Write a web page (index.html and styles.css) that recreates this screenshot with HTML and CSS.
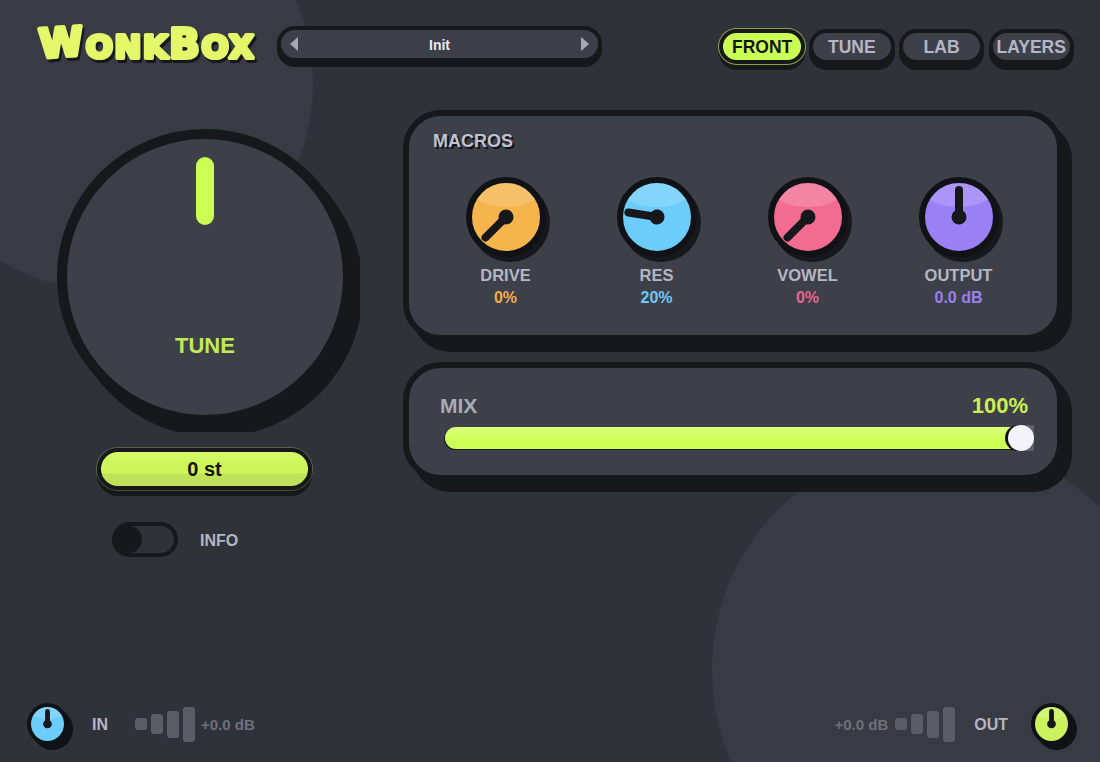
FILE: index.html
```html
<!DOCTYPE html>
<html lang="en">
<head>
    <meta charset="UTF-8">
    <title>WonkBox</title>
    <link rel="stylesheet" href="styles.css">
</head>
<body>
<div class="app">
    <div class="blob blobTop"></div>
    <div class="blob blobBottom"></div>

    <div class="header">
        <svg class="logo" width="240" height="60" viewBox="0 0 240 60">
            <text x="4" y="44" rotate="-4 0 0 0 0 0 0"><tspan class="logoBig">W</tspan>ONK<tspan class="logoBig">B</tspan>OX</text>
        </svg>
        <div class="preset">
            <div class="arrowLeft"></div>
            <div class="presetName">Init</div>
            <div class="arrowRight"></div>
        </div>
        <div class="tabs">
            <div class="tab tabActive">FRONT</div>
            <div class="tab">TUNE</div>
            <div class="tab">LAB</div>
            <div class="tab">LAYERS</div>
        </div>
    </div>

    <div class="main">
        <div class="leftDiv">
            <div class="bigKnobClip">
                <div class="bigKnob">
                    <div class="bigNeedle"></div>
                    <div class="bigLabel">TUNE</div>
                </div>
            </div>
            <div class="valuePill">0 st</div>
            <div class="infoRow">
                <div class="toggle"><div class="toggleThumb"></div></div>
                <div class="infoLabel">INFO</div>
            </div>
        </div>

        <div class="rightDiv">
            <div class="panel macros">
                <div class="macrosTitle">MACROS</div>
                <div class="macroGrid">
                    <div class="macro">
                        <div class="knob orange">
                            <svg class="needle" viewBox="-34 -34 68 68"><g transform="rotate(-135)"><line x1="0" y1="0" x2="0" y2="-29"/><circle r="7.5"/></g></svg>
                        </div>
                        <div class="macroName">DRIVE</div>
                        <div class="macroValue orangeText">0%</div>
                    </div>
                    <div class="macro">
                        <div class="knob blue">
                            <svg class="needle" viewBox="-34 -34 68 68"><g transform="rotate(-81)"><line x1="0" y1="0" x2="0" y2="-29"/><circle r="7.5"/></g></svg>
                        </div>
                        <div class="macroName">RES</div>
                        <div class="macroValue blueText">20%</div>
                    </div>
                    <div class="macro">
                        <div class="knob pink">
                            <svg class="needle" viewBox="-34 -34 68 68"><g transform="rotate(-135)"><line x1="0" y1="0" x2="0" y2="-29"/><circle r="7.5"/></g></svg>
                        </div>
                        <div class="macroName">VOWEL</div>
                        <div class="macroValue pinkText">0%</div>
                    </div>
                    <div class="macro">
                        <div class="knob purple">
                            <svg class="needle" viewBox="-34 -34 68 68"><g transform="rotate(0)"><line x1="0" y1="0" x2="0" y2="-27"/><circle r="7.5"/></g></svg>
                        </div>
                        <div class="macroName">OUTPUT</div>
                        <div class="macroValue purpleText">0.0 dB</div>
                    </div>
                </div>
            </div>

            <div class="panel mix">
                <div class="mixHead">
                    <div class="mixLabel">MIX</div>
                    <div class="mixValue">100%</div>
                </div>
                <div class="mixTrack">
                    <div class="mixThumb"></div>
                </div>
            </div>
        </div>
    </div>

    <div class="footer">
        <div class="io">
            <div class="knob knobSmall blue">
                <svg class="needle" viewBox="-17 -17 34 34"><line class="thin" x1="0" y1="0" x2="0" y2="-13"/><circle r="4.5"/></svg>
            </div>
            <div class="ioLabel ioIn">IN</div>
            <div class="meter meterIn"><i class="bar1"></i><i class="bar2"></i><i class="bar3"></i><i class="bar4"></i></div>
            <div class="ioDb">+0.0 dB</div>
        </div>
        <div class="io">
            <div class="ioDb">+0.0 dB</div>
            <div class="meter meterOut"><i class="bar1"></i><i class="bar2"></i><i class="bar3"></i><i class="bar4"></i></div>
            <div class="ioLabel ioOut">OUT</div>
            <div class="knob knobSmall lime">
                <svg class="needle" viewBox="-17 -17 34 34"><line class="thin" x1="0" y1="0" x2="0" y2="-13"/><circle r="4.5"/></svg>
            </div>
        </div>
    </div>
</div>
</body>
</html>
```

FILE: styles.css
```css
body {
    margin: 0;
    font-family: "Liberation Sans", Arial, sans-serif;
    font-weight: bold;
}

.app {
    position: relative;
    display: flex;
    flex-direction: column;
    width: 1100px;
    height: 762px;
    overflow: hidden;
    background-color: #30323a;
}

/* big soft circles behind everything */
.blob {
    position: absolute;
    border-radius: 50%;
    background-color: #383b43;
}

.blobTop {
    left: -101px;
    top: -124px;
    width: 414px;
    height: 414px;
}

.blobBottom {
    left: 712px;
    top: 442px;
    width: 456px;
    height: 456px;
}

.header, .main, .footer {
    position: relative;
}

.header {
    display: flex;
    align-items: flex-start;
    height: 110px;
    padding: 0 26px 0 36px;
    box-sizing: border-box;
}

.logo {
    margin-top: 14px;
    filter: drop-shadow(2px 3px 0 #17181c);
}

.logo text {
    font-family: "DejaVu Sans", sans-serif;
    font-weight: bold;
    font-size: 32px;
    letter-spacing: 1.6px;
    fill: #e4f76a;
    stroke: #e4f76a;
    stroke-width: 4px;
    stroke-linejoin: round;
}

.logoBig {
    font-size: 40px;
}

.preset {
    display: flex;
    align-items: center;
    justify-content: space-between;
    box-sizing: border-box;
    width: 325px;
    height: 36px;
    margin: 26px 0 0 1px;
    padding: 0 9px;
    border: 4px solid #17181c;
    border-radius: 18px;
    background-color: #3d4049;
    box-shadow: 0 5px 0 #17181c;
}

.presetName {
    padding-top: 2px;
    font-size: 14px;
    color: #eaeaf2;
}

.arrowLeft {
    border-top: 7px solid transparent;
    border-bottom: 7px solid transparent;
    border-right: 8px solid #a6a8b6;
}

.arrowRight {
    border-top: 7px solid transparent;
    border-bottom: 7px solid transparent;
    border-left: 8px solid #a6a8b6;
}

.tabs {
    display: flex;
    gap: 4.2px;
    margin: 29px 0 0 auto;
}

.tab {
    box-sizing: border-box;
    width: 85.5px;
    height: 35px;
    border: 4px solid #17181c;
    border-radius: 18px;
    background-color: #3d4049;
    box-shadow: 0 6px 0 #17181c;
    text-align: center;
    line-height: 29px;
    font-size: 17.5px;
    color: #b4b6c6;
}

.tabActive {
    background-color: #ccff55;
    color: #14150f;
    box-shadow: 0 0 0 1px #8f9f4c, 0 6px 0 #17181c;
}

.main {
    display: flex;
    flex: 1;
    padding-left: 57px;
}

.leftDiv {
    width: 303px;
    padding-top: 19px;
}

.bigKnobClip {
    width: 303px;
    height: 303px;
    overflow: hidden;
}

.bigKnob {
    display: flex;
    flex-direction: column;
    align-items: center;
    box-sizing: border-box;
    width: 296px;
    height: 296px;
    padding-top: 18px;
    border: 10px solid #17181c;
    border-radius: 50%;
    background-color: #3d4049;
    box-shadow: 10px 12px 0 #17181c;
}

.bigNeedle {
    width: 18px;
    height: 68px;
    border-radius: 9px;
    background-color: #ccff55;
}

.bigLabel {
    margin-top: 109px;
    line-height: 24px;
    font-size: 22px;
    color: #c2ea58;
}

.valuePill {
    box-sizing: border-box;
    width: 215px;
    height: 42px;
    margin: 16px 0 0 40px;
    border: 4px solid #17181c;
    border-radius: 21px;
    background: linear-gradient(#d6fb6c, #cdf65a 30%, #cdf65a 62%, #bfe25a 66%);
    box-shadow: 0 0 0 1px rgba(204, 255, 85, 0.25), 0 6px 0 #17181c;
    text-align: center;
    line-height: 34px;
    font-size: 20px;
    color: #14150f;
}

.infoRow {
    display: flex;
    align-items: center;
    gap: 22px;
    margin: 32px 0 0 55px;
}

.toggle {
    box-sizing: border-box;
    width: 66px;
    height: 35px;
    border: 4px solid #17181c;
    border-radius: 18px;
}

.toggleThumb {
    width: 26px;
    height: 27px;
    border-radius: 50%;
    background-color: #17181c;
}

.infoLabel {
    padding-top: 2px;
    font-size: 16px;
    color: #b4b6c4;
}

.rightDiv {
    display: flex;
    flex-direction: column;
    gap: 21px;
    width: 660px;
    margin-left: 43px;
}

.panel {
    box-sizing: border-box;
    border: 6px solid #17181c;
    border-radius: 38px;
    background-color: #3d4049;
    box-shadow: 9px 11px 0 #17181c;
}

.macros {
    height: 231px;
    padding: 15px 23px 0 21px;
}

.macrosTitle {
    margin-left: 3px;
    line-height: 20px;
    font-size: 18px;
    color: #c0c2d0;
    text-shadow: 2px 2px 0 #111216;
}

.macroGrid {
    display: grid;
    grid-template-columns: repeat(4, 151px);
    margin-top: 26px;
}

.macro {
    display: flex;
    flex-direction: column;
    align-items: center;
}

.knob {
    position: relative;
    box-sizing: border-box;
    width: 80px;
    height: 80px;
    border: 6px solid #111216;
    border-radius: 50%;
    box-shadow: 4px 5px 0 #17181c;
    overflow: hidden;
}

.knob::before {
    content: "";
    position: absolute;
    left: -9%;
    top: -35%;
    width: 118%;
    height: 70%;
    border-radius: 50%;
    background-color: rgba(255, 255, 255, 0.17);
}

.needle {
    position: absolute;
    left: 0;
    top: 0;
    width: 100%;
    height: 100%;
}

.needle line {
    stroke: #17181c;
    stroke-width: 8;
    stroke-linecap: round;
}

.needle line.thin {
    stroke-width: 5;
}

.needle circle {
    fill: #17181c;
}

.orange { background-color: #f5b44c; }
.blue { background-color: #6ccdfb; }
.pink { background-color: #f26c92; }
.purple { background-color: #9a80f5; }
.lime { background-color: #c9f25c; }

.orangeText { color: #f2ae4c; }
.blueText { color: #6ec8f5; }
.pinkText { color: #e8658e; }
.purpleText { color: #9a80ee; }

.macroName {
    margin-top: 9px;
    line-height: 18px;
    font-size: 16.5px;
    color: #b4b6c4;
}

.macroValue {
    margin-top: 5px;
    line-height: 18px;
    font-size: 16px;
}

.mix {
    height: 119px;
    padding-top: 26px;
}

.mixHead {
    display: flex;
    justify-content: space-between;
    padding: 0 29px 0 31px;
    line-height: 24px;
}

.mixLabel {
    font-size: 21px;
    color: #a8aab8;
}

.mixValue {
    font-size: 22px;
    color: #ccee55;
}

.mixTrack {
    position: relative;
    height: 22px;
    margin: 9px 23px 0 36px;
    border-radius: 11px 0 0 11px;
    background: linear-gradient(#dcff78, #ccff55 70%);
    box-shadow: -1px 1px 0 #17181c;
}

/* square end of the track that shows in the thumb's right corners */
.mixTrack::before {
    content: "";
    position: absolute;
    right: 0;
    top: -2px;
    width: 13px;
    height: 26px;
    background-color: #5d5f69;
}

.mixThumb {
    position: absolute;
    right: 0;
    top: -2px;
    width: 26px;
    height: 26px;
    border-radius: 50%;
    background-color: #f2f2f8;
    box-shadow: -3px 0 0 #111216;
}

.footer {
    display: flex;
    justify-content: space-between;
    padding: 0 28px 17px 27px;
}

.io {
    display: flex;
    align-items: center;
}

.knobSmall {
    width: 41px;
    height: 42px;
    border-width: 4px;
    box-shadow: 5px 5px 0 #111216;
}

.ioLabel {
    padding-top: 2px;
    font-size: 16px;
    color: #b4b6c4;
}

.ioIn {
    margin: 0 27px 0 24px;
}

.ioOut {
    margin: 0 23px 0 19px;
}

.meter {
    display: flex;
    align-items: center;
    gap: 4px;
}

.meter i {
    width: 12px;
    border-radius: 3px;
    background-color: #5a5c67;
}

.meterIn {
    margin-right: 6px;
}

.meterOut {
    margin-left: 7px;
}

.bar1 { height: 12px; }
.bar2 { height: 20px; }
.bar3 { height: 27px; }
.bar4 { height: 35px; }

.ioDb {
    font-size: 15px;
    color: #6e7079;
}
```
